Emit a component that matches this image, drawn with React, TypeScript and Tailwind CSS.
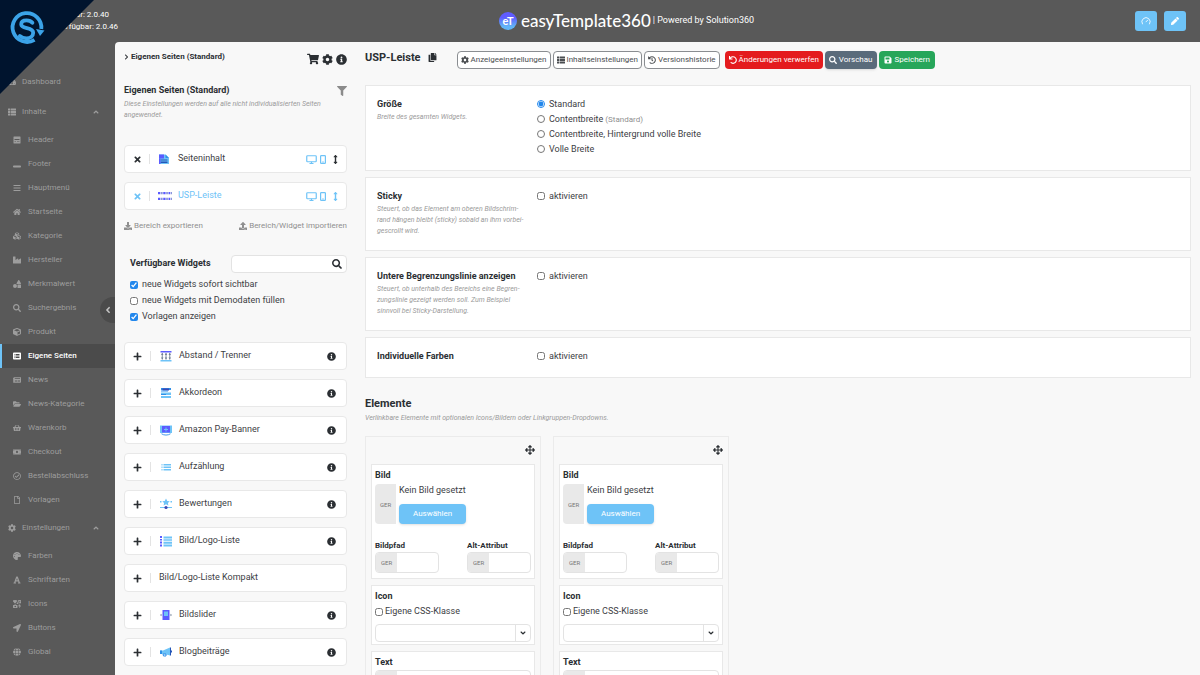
import React from "react";
import {
  FaAngleDown,
  FaAngleLeft,
  FaAngleUp,
  FaArrowsAlt,
  FaArrowsAltV,
  FaBars,
  FaChevronRight,
  FaCog,
  FaCopy,
  FaCube,
  FaCubes,
  FaDownload,
  FaFilter,
  FaFolderOpen,
  FaFont,
  FaGlobe,
  FaHistory,
  FaHome,
  FaIcons,
  FaIndustry,
  FaInfoCircle,
  FaListAlt,
  FaLocationArrow,
  FaMoneyBill,
  FaNewspaper,
  FaPalette,
  FaPen,
  FaPlus,
  FaRegCheckCircle,
  FaRegFile,
  FaSave,
  FaSearch,
  FaShapes,
  FaShoppingBasket,
  FaShoppingCart,
  FaTachometerAlt,
  FaThList,
  FaTimes,
  FaUndo,
  FaUpload,
  FaWindowMinimize,
} from "react-icons/fa";
import { Gauge } from "lucide-react";

const BLUE = "#6ec3f7";
const INDIGO = "#5b5bff";
const NAVY = "#3b47b5";

function HeaderIcon() {
  return (
    <svg viewBox="0 0 16 16" width="8" height="8" fill="currentColor" aria-hidden="true">
      <path fillRule="evenodd" d="M2 1h12a1 1 0 0 1 1 1v12a1 1 0 0 1-1 1H2a1 1 0 0 1-1-1V2a1 1 0 0 1 1-1zm1 5v2h10V6zm0 4v1h3v-1zm5 0v1h5v-1z" />
    </svg>
  );
}

function DesktopIcon() {
  return (
    <svg viewBox="0 0 22 18" width="11" height="9" fill="none" stroke="currentColor" strokeWidth="2.400" aria-hidden="true">
      <rect x="1.500" y="1.500" width="19" height="12" rx="1.500" />
      <path d="M11 13.500V17M7 17h8" />
    </svg>
  );
}

function PhoneIcon() {
  return (
    <svg viewBox="0 0 12 18" width="6" height="9" fill="none" stroke="currentColor" strokeWidth="2.400" aria-hidden="true">
      <rect x="1.200" y="1.200" width="9.600" height="15.600" rx="1.500" />
      <path d="M4.500 14h3" />
    </svg>
  );
}

type Art =
  | "content"
  | "usp"
  | "spacer"
  | "accordion"
  | "amazon"
  | "bullets"
  | "rating"
  | "logos"
  | "slider"
  | "blog";

const art: Record<Art, React.ReactNode> = {
  content: (
    <>
      <path d="M2 3h13l7 7v12H2z" fill={BLUE} />
      <path d="M2 3h10v8H2z" fill={INDIGO} />
      <path d="M15 3l7 7h-7z" fill="#2f8fe8" />
      <path d="M5 13h14v2H5zM5 17h14v3H5z" fill="#2456b8" />
      <path d="M2 11h3v11H2z" fill={INDIGO} />
    </>
  ),
  usp: (
    <>
      <path d="M0 5h4v4H0zM0 15h4v4H0zM9 5h4v4H9zM9 15h4v4H9zM18 5h3v4h-3zM18 15h3v4h-3z" fill={INDIGO} />
      <path d="M5 5h3v4H5zM5 15h3v4H5zM14 5h3v4h-3zM14 15h3v4h-3zM22 5h2v4h-2zM22 15h2v4h-2z" fill="#8a96d8" />
    </>
  ),
  spacer: (
    <>
      <path d="M1 2h22v3H1z" fill={INDIGO} />
      <path d="M1 20h22v3H1z" fill={BLUE} />
      <path d="M4.500 6v13M12 6v13M19.500 6v13" stroke="#6f7f95" strokeWidth="1.800" />
      <path d="M2 10l2.500-4L7 10zM9.500 10L12 6l2.500 4zM17 10l2.500-4 2.500 4zM2 15l2.500 4L7 15zM9.500 15l2.500 4 2.500-4zM17 15l2.500 4 2.500-4z" fill="#6f7f95" />
    </>
  ),
  accordion: (
    <>
      <path d="M2 2h20v4H2z" fill="#2f8fe8" />
      <path d="M5 3h13v4H5z" fill={NAVY} />
      <path d="M2 7h14v2H2z" fill="#2f8fe8" />
      <path d="M2 11h20v5H2zM2 18h20v4H2z" fill={BLUE} />
      <path d="M2 14h10v2H2z" fill="#2f8fe8" />
    </>
  ),
  amazon: (
    <>
      <path d="M0 3h24v15H0z" fill={BLUE} />
      <path d="M4 4h16v13H4z" fill={INDIGO} />
      <path d="M11 7h2v3h3v2h-3v3h-2v-3H8v-2h3z" fill={BLUE} />
      <path d="M3 19.500c5 3.500 13 3.500 18 0" stroke="#2f8fe8" strokeWidth="1.800" fill="none" />
    </>
  ),
  bullets: (
    <>
      <path d="M3 6h2v3H3zM3 11h2v3H3zM3 16h2v3H3z" fill={BLUE} />
      <path d="M7 6h15v3H7zM7 11h15v3H7zM7 16h15v3H7z" fill={BLUE} />
    </>
  ),
  rating: (
    <>
      <path d="M12 1l2.500 4.800 5 .8-3.600 3.600.9 5-4.800-2.500L7.200 15.200l.9-5-3.600-3.600 5-.8z" fill={BLUE} />
      <path d="M0 6h3v3H0zM21 6h3v3h-3z" fill={BLUE} />
      <path d="M0 18h24v2H0z" fill={BLUE} />
      <circle cx="12" cy="19" r="3.200" fill={NAVY} />
    </>
  ),
  logos: (
    <>
      <path d="M0 2h4v4H0zM0 8h4v3H0zM0 13h4v4H0zM0 19h4v4H0z" fill={INDIGO} />
      <path d="M7 3h17v4H7zM7 8.500h17v3H7zM7 13.500h17v4H7zM7 19h17v4H7z" fill={BLUE} />
    </>
  ),
  slider: (
    <>
      <path d="M5 2h14v20H5z" fill={INDIGO} />
      <path d="M8 5h8v9H8z" fill={BLUE} />
      <path d="M3 9.500v5L0 12zM21 9.500v5l3-2.500z" fill="#6f7f95" />
    </>
  ),
  blog: (
    <>
      <path d="M0 9h6l14-6v16L9 16H0z" fill={BLUE} />
      <path d="M0 9h4v7H0z" fill="#2f8fe8" />
      <path d="M20 3h2v16h-2zM22 9h2v4h-2z" fill="#2456b8" />
      <path d="M6 16h6v4H7z" fill="none" stroke="#2f8fe8" strokeWidth="2" />
    </>
  ),
};

function WidgetArt({ name }: { name: Art }) {
  return (
    <svg viewBox="0 0 24 24" className={name === "usp" ? "h-[14px] w-[14px] shrink-0" : "h-3 w-3 shrink-0"} aria-hidden="true">
      {art[name]}
    </svg>
  );
}

const contentLinks: { label: string; icon: React.ReactNode; active?: boolean }[] = [
  { label: "Header", icon: <HeaderIcon /> },
  { label: "Footer", icon: <FaWindowMinimize /> },
  { label: "Hauptmenü", icon: <FaBars /> },
  { label: "Startseite", icon: <FaHome /> },
  { label: "Kategorie", icon: <FaCubes /> },
  { label: "Hersteller", icon: <FaIndustry /> },
  { label: "Merkmalwert", icon: <FaShapes /> },
  { label: "Suchergebnis", icon: <FaSearch /> },
  { label: "Produkt", icon: <FaCube /> },
  { label: "Eigene Seiten", icon: <FaListAlt />, active: true },
  { label: "News", icon: <FaNewspaper /> },
  { label: "News-Kategorie", icon: <FaFolderOpen /> },
  { label: "Warenkorb", icon: <FaShoppingBasket /> },
  { label: "Checkout", icon: <FaMoneyBill /> },
  { label: "Bestellabschluss", icon: <FaRegCheckCircle /> },
  { label: "Vorlagen", icon: <FaRegFile /> },
];

const settingLinks = [
  { label: "Farben", icon: <FaPalette /> },
  { label: "Schriftarten", icon: <FaFont /> },
  { label: "Icons", icon: <FaIcons /> },
  { label: "Buttons", icon: <FaLocationArrow /> },
  { label: "Global", icon: <FaGlobe /> },
];

function NavLink({ label, icon, active }: { label: string; icon: React.ReactNode; active?: boolean }) {
  return (
    <li>
      <a
        href="#"
        className={
          active
            ? "flex h-6 items-center border-l-2 border-[#6ec3f7] bg-[#4b4b4b] pl-[11px] font-medium text-white"
            : "flex h-6 items-center pl-[13px]"
        }
      >
        <span className="flex w-[15px]">{icon}</span>
        {label}
      </a>
    </li>
  );
}

function NavGroup({ label, icon, children }: { label: string; icon: React.ReactNode; children: React.ReactNode }) {
  return (
    <div>
      <button type="button" className="flex h-6 w-full items-center pr-[15px] pl-2">
        <span className="flex w-[14px]">{icon}</span>
        <span className="flex-1 text-left">{label}</span>
        <FaAngleUp />
      </button>
      <ul className="mt-1">{children}</ul>
    </div>
  );
}

function Sidebar() {
  return (
    <nav className="relative w-[115px] shrink-0 bg-[#595959] pt-7 text-[8px] text-[#9d9d9d]" aria-label="Navigation">
      <a href="#" className="flex h-6 items-center pl-2">
        <span className="flex w-[14px]">
          <FaTachometerAlt />
        </span>
        Dashboard
      </a>
      <div className="mt-[6px] flex flex-col gap-1">
        <NavGroup label="Inhalte" icon={<FaThList />}>
          {contentLinks.map((l) => (
            <NavLink key={l.label} {...l} />
          ))}
        </NavGroup>
        <NavGroup label="Einstellungen" icon={<FaCog />}>
          {settingLinks.map((l) => (
            <NavLink key={l.label} {...l} />
          ))}
        </NavGroup>
      </div>
      <button
        type="button"
        aria-label="Navigation einklappen"
        className="absolute top-[255px] right-0 flex h-[26px] w-[15px] items-center justify-center rounded-l-full bg-[#4b4b4b] text-[10px] text-[#c4c4c4]"
      >
        <FaAngleLeft />
      </button>
    </nav>
  );
}

function TopBar() {
  return (
    <header className="flex h-[42px] shrink-0 items-center bg-[#595959] text-white">
      <div className="flex w-[118px] shrink-0 flex-col items-end text-[8px] leading-3 whitespace-nowrap">
        <span className="pr-[9px]">ar: 2.0.40</span>
        <span>Verfügbar: 2.0.46</span>
      </div>
      <div className="flex flex-1 items-center justify-center">
        <svg viewBox="0 0 36 36" className="mr-1 h-[18px] w-[18px]" role="img" aria-label="easyTemplate360">
          <defs>
            <linearGradient id="badge" x1="0" y1="0" x2="0" y2="1">
              <stop offset="0.3" stopColor="#5f5cff" />
              <stop offset="0.8" stopColor="#62b4f7" />
            </linearGradient>
          </defs>
          <circle cx="18" cy="18" r="18" fill="url(#badge)" />
          <text x="18" y="26" textAnchor="middle" fill="#fff" fontSize="22" fontWeight="700" fontFamily="Lato, sans-serif">
            eT
          </text>
        </svg>
        <span className="font-['Lato',sans-serif] text-[17px] leading-[22px] font-medium">easyTemplate360</span>
        <span className="ml-[2px] text-[9px]">| Powered by Solution360</span>
      </div>
      <div className="flex gap-[7px] pr-[14px]">
        <button type="button" aria-label="Dashboard" className="flex h-5 w-[22px] items-center justify-center rounded-[3px] bg-[#6ec3f7]">
          <Gauge size={10} />
        </button>
        <button type="button" aria-label="Bearbeiten" className="flex h-5 w-[22px] items-center justify-center rounded-[3px] bg-[#6ec3f7] text-[8px]">
          <FaPen />
        </button>
      </div>
    </header>
  );
}

function CornerLogo() {
  return (
    <svg viewBox="0 0 94 94" className="absolute top-0 left-0 h-[94px] w-[94px]" role="img" aria-label="Solution360">
      <polygon points="0,0 94,0 0,94" fill="#00142e" />
      <g fill="none" stroke="#3ba3e8">
        <path d="M34.500 39.800A14.400 14.400 0 1 1 41.300 29" strokeWidth="3.800" />
        <path
          d="M32.400 22.800C30.800 20.800 28.500 20.400 26.500 20.400c-3.400 0-5.300 1.600-5.300 3.900 0 5.400 12 2.200 12 8.500 0 3.400-2.800 5.500-6.700 5.500-2.500 0-4.700-.6-6.700-2.400"
          strokeWidth="3.800"
          strokeLinecap="round"
        />
      </g>
      <polygon points="36,29 44.500,30.500 40,36" fill="#3ba3e8" />
    </svg>
  );
}

function PlacedWidget({ label, icon, active }: { label: string; icon: Art; active?: boolean }) {
  return (
    <li
      className={
        "flex h-7 items-center rounded-[4px] border border-[#e8e8e8] bg-white pr-[6px] text-[9px] " +
        (active ? "text-[#6ec3f7]" : "text-[#3d4044]")
      }
    >
      <button type="button" aria-label={label + " entfernen"} className="flex w-6 justify-center">
        <FaTimes className={active ? "text-[#6ec3f7]" : "text-[#2b2f33]"} />
      </button>
      <span className="h-[10px] w-[9px] shrink-0 border-l border-[#e3e3e3]" />
      <span className="flex w-5 justify-start">
        <WidgetArt name={icon} />
      </span>
      <span className="flex-1">{label}</span>
      <span className="flex items-center gap-[3px] text-[#6ec3f7]">
        <DesktopIcon />
        <PhoneIcon />
      </span>
      <FaArrowsAltV className={active ? "ml-[5px] text-[#6ec3f7]" : "ml-[5px] text-[#2b2f33]"} />
    </li>
  );
}

const widgets: { label: string; icon?: Art }[] = [
  { label: "Abstand / Trenner", icon: "spacer" },
  { label: "Akkordeon", icon: "accordion" },
  { label: "Amazon Pay-Banner", icon: "amazon" },
  { label: "Aufzählung", icon: "bullets" },
  { label: "Bewertungen", icon: "rating" },
  { label: "Bild/Logo-Liste", icon: "logos" },
  { label: "Bild/Logo-Liste Kompakt" },
  { label: "Bildslider", icon: "slider" },
  { label: "Blogbeiträge", icon: "blog" },
];

function AvailableWidget({ label, icon }: { label: string; icon?: Art }) {
  return (
    <li className="flex h-7 shrink-0 items-center rounded-[4px] border border-[#e8e8e8] bg-white pr-[10px] text-[9px] text-[#3d4044]">
      <button type="button" aria-label={label + " hinzufügen"} className="flex w-[25px] justify-center text-[#2b2f33]">
        <FaPlus />
      </button>
      <span className={icon ? "h-[10px] w-[10px] shrink-0 border-l border-[#e3e3e3]" : "h-[10px] w-[9px] shrink-0 border-l border-[#e3e3e3]"} />
      {icon && (
        <span className="flex w-[19px]">
          <WidgetArt name={icon} />
        </span>
      )}
      <span className="flex-1">{label}</span>
      {icon && <FaInfoCircle className="text-[#2b2f33]" />}
    </li>
  );
}

function Check({ label, checked }: { label: string; checked?: boolean }) {
  return (
    <label className="flex h-4 items-center gap-1">
      <input type="checkbox" defaultChecked={checked} className="mb-px h-2 w-2 accent-[#2287ec]" />
      {label}
    </label>
  );
}

function WidgetPanel() {
  return (
    <section className="flex w-[232px] shrink-0 flex-col overflow-hidden pt-[7px] pl-[9px]">
      <div className="flex h-4 items-center justify-between">
        <div className="flex items-center gap-[2px] text-[8px] font-bold">
          <FaChevronRight className="h-[6px] w-[5px]" />
          Eigenen Seiten (Standard)
        </div>
        <div className="flex items-center gap-[3px] pt-1 text-[11px]">
          <FaShoppingCart className="text-[12px]" />
          <FaCog />
          <FaInfoCircle />
        </div>
      </div>
      <div className="mt-[18px] flex h-4 items-center justify-between">
        <h2 className="text-[9px] font-bold">Eigenen Seiten (Standard)</h2>
        <FaFilter className="text-[10px] text-[#8b8b8b]" />
      </div>
      <p className="text-[7px] leading-[11px] text-[#9a9a9a] italic">
        Diese Einstellungen werden auf alle nicht individualisierten Seiten angewendet.
      </p>
      <ul className="mt-6 flex flex-col gap-[9px]">
        <PlacedWidget label="Seiteninhalt" icon="content" />
        <PlacedWidget label="USP-Leiste" icon="usp" active />
      </ul>
      <div className="mt-2 flex h-4 items-center justify-between text-[8px] text-[#8f8f8f]">
        <button type="button" className="flex items-center gap-[2px]">
          <FaDownload />
          Bereich exportieren
        </button>
        <button type="button" className="flex items-center gap-[2px]">
          <FaUpload />
          Bereich/Widget importieren
        </button>
      </div>
      <div className="mt-[21px] flex items-center justify-between pl-[6px]">
        <h2 className="text-[9px] font-bold">Verfügbare Widgets</h2>
        <label className="flex h-[18px] w-[116px] items-center rounded-[4px] border border-[#e3e3e3] bg-white pr-1 text-[10px]">
          <input type="search" aria-label="Widgets suchen" className="min-w-0 flex-1 px-1 text-[9px] outline-none" />
          <FaSearch />
        </label>
      </div>
      <div className="mt-1 pl-[6px] text-[9px] text-[#3d4044]">
        <Check label="neue Widgets sofort sichtbar" checked />
        <Check label="neue Widgets mit Demodaten füllen" />
        <Check label="Vorlagen anzeigen" checked />
      </div>
      <ul className="mt-[17px] flex flex-col gap-[9px]">
        {widgets.map((w) => (
          <AvailableWidget key={w.label} {...w} />
        ))}
      </ul>
    </section>
  );
}

const outline =
  "flex h-[18px] items-center gap-[2px] rounded-[4px] border border-[#8a8d91] bg-white px-[3px] text-[#4a4d50]";

function SettingCard({ title, text, children }: { title: string; text?: string; children: React.ReactNode }) {
  return (
    <div className="grid grid-cols-[160px_1fr] border border-[#e8e8e8] bg-white px-[11px] pt-[11px] pb-[13px]">
      <div>
        <h3 className="text-[9px] leading-[15px] font-bold">{title}</h3>
        {text && <p className="w-[150px] text-[7px] leading-[11px] text-[#9a9a9a] italic">{text}</p>}
      </div>
      <div className="text-[9px] leading-[15px] text-[#3d4044]">{children}</div>
    </div>
  );
}

function Activate() {
  return (
    <label className="flex h-[15px] items-center gap-1">
      <input type="checkbox" className="mb-[2px] h-2 w-2" />
      aktivieren
    </label>
  );
}

const widths: { label: string; note?: string }[] = [
  { label: "Standard" },
  { label: "Contentbreite", note: "(Standard)" },
  { label: "Contentbreite, Hintergrund volle Breite" },
  { label: "Volle Breite" },
];

function LangInput({ label, id, className }: { label: string; id: string; className: string }) {
  return (
    <div className={className}>
      <label htmlFor={id} className="block text-[8px] leading-[13px] font-bold">
        {label}
      </label>
      <div className="flex h-[21px] overflow-hidden rounded-[4px] border border-[#e3e3e3] bg-white">
        <span className="flex w-[21px] shrink-0 items-center justify-center bg-[#e9e9e9] text-[6px] text-[#777]">GER</span>
        <input id={id} type="text" className="min-w-0 flex-1 px-1 text-[8px] outline-none" />
      </div>
    </div>
  );
}

function ElementColumn({ n }: { n: number }) {
  return (
    <article className="w-[176px] border border-[#ebebeb] px-[5px] pt-[7px]">
      <div className="flex h-5 justify-end text-[10px]">
        <button type="button" aria-label="Element verschieben" className="flex h-3 items-center">
          <FaArrowsAlt />
        </button>
      </div>
      <div className="flex flex-col gap-[6px]">
        <div className="border border-[#e8e8e8] bg-white px-[3px] pt-1 pb-[5px]">
          <h4 className="text-[9px] leading-3 font-bold">Bild</h4>
          <div className="mt-[3px] flex gap-[3px]">
            <span className="flex h-10 w-[21px] items-center justify-center rounded-l-[4px] bg-[#e9e9e9] text-[6px] text-[#777]">GER</span>
            <div className="flex flex-col items-start justify-between">
              <span className="text-[9px] leading-3 text-[#3d4044]">Kein Bild gesetzt</span>
              <button type="button" className="h-5 rounded-[4px] bg-[#6ec3f7] px-[14px] text-[8px] text-white shadow-sm">
                Auswählen
              </button>
            </div>
          </div>
          <div className="mt-[15px] flex justify-between">
            <LangInput id={"pfad-" + n} label="Bildpfad" className="w-16" />
            <LangInput id={"alt-" + n} label="Alt-Attribut" className="w-16" />
          </div>
        </div>
        <div className="border border-[#e8e8e8] bg-white px-[3px] pt-1 pb-[2px]">
          <h4 className="text-[9px] leading-3 font-bold">Icon</h4>
          <label className="mt-[2px] flex h-4 items-center gap-[2px] text-[9px] text-[#3d4044]">
            <input type="checkbox" className="mb-px h-2 w-2" />
            Eigene CSS-Klasse
          </label>
          <div className="mt-1 grid h-[18px] grid-cols-[1fr_15px] overflow-hidden rounded-[4px] border border-[#e3e3e3] bg-white">
            <select aria-label="Icon" className="col-span-2 col-start-1 row-start-1 appearance-none bg-transparent px-1 text-[8px] outline-none">
              <option value="" />
            </select>
            <span className="pointer-events-none col-start-2 row-start-1 flex items-center justify-center border-l border-[#e3e3e3] text-[8px]">
              <FaAngleDown />
            </span>
          </div>
        </div>
        <div className="border border-[#e8e8e8] bg-white px-[3px] pt-1 pb-[5px]">
          <label htmlFor={"text-" + n} className="mb-[2px] block text-[9px] leading-3 font-bold">
            Text
          </label>
          <div className="flex h-10 overflow-hidden rounded-[4px] border border-[#e3e3e3] bg-white">
            <span className="w-[21px] shrink-0 bg-[#e9e9e9]" />
            <textarea id={"text-" + n} className="min-w-0 flex-1 resize-none px-1 text-[8px] outline-none" />
          </div>
        </div>
      </div>
    </article>
  );
}

function Editor() {
  return (
    <main className="min-w-0 flex-1 overflow-hidden pt-2 pr-[9px] pl-[18px]">
      <div className="flex items-start">
        <h1 className="text-[11px] leading-[15px] font-bold">USP-Leiste</h1>
        <button type="button" aria-label="Kopieren" className="mt-[3px] ml-[7px] text-[9px]">
          <FaCopy />
        </button>
        <div className="mt-px ml-5 flex gap-[2px] text-[8px] whitespace-nowrap">
          <button type="button" className={outline}>
            <FaCog />
            Anzeigeeinstellungen
          </button>
          <button type="button" className={outline}>
            <FaThList />
            Inhaltseinstellungen
          </button>
          <button type="button" className={outline}>
            <FaHistory />
            Versionshistorie
          </button>
          <button type="button" className="ml-[3px] flex h-[18px] items-center gap-[2px] rounded-[4px] bg-[#e41b1e] px-1 text-white">
            <FaUndo />
            Änderungen verwerfen
          </button>
          <button type="button" className="flex h-[18px] items-center gap-[2px] rounded-[4px] bg-[#5a6b7b] px-1 text-white shadow-sm">
            <FaSearch />
            Vorschau
          </button>
          <button type="button" className="flex h-[18px] items-center gap-[3px] rounded-[4px] bg-[#27a65a] px-[5px] text-white">
            <FaSave />
            Speichern
          </button>
        </div>
      </div>

      <div className="mt-4 flex flex-col gap-[6px]">
        <SettingCard title="Größe" text="Breite des gesamten Widgets.">
          {widths.map((w, i) => (
            <label key={w.label} className="flex h-[15px] items-center gap-1">
              <input type="radio" name="breite" defaultChecked={i === 0} className="mb-[2px] h-2 w-2 accent-[#2287ec]" />
              <span>
                {w.label}
                {w.note && <span className="text-[8px] text-[#8f8f8f]"> {w.note}</span>}
              </span>
            </label>
          ))}
        </SettingCard>
        <SettingCard title="Sticky" text={"Steuert, ob das Element am oberen Bildschrim\u00ADrand hängen bleibt (sticky) sobald an ihm vorbei\u00ADgescrollt wird."}>
          <Activate />
        </SettingCard>
        <SettingCard
          title="Untere Begrenzungslinie anzeigen"
          text={"Steuert, ob unterhalb des Bereichs eine Begren\u00ADzungslinie gezeigt werden soll. Zum Beispiel sinnvoll bei Sticky-Darstellung."}
        >
          <Activate />
        </SettingCard>
        <SettingCard title="Individuelle Farben">
          <Activate />
        </SettingCard>
      </div>

      <h2 className="mt-[18px] text-[11px] leading-[15px] font-bold">Elemente</h2>
      <p className="mt-[2px] text-[7px] leading-[11px] text-[#9a9a9a] italic">
        Verlinkbare Elemente mit optionalen Icons/Bildern oder Linkgruppen-Dropdowns.
      </p>
      <div className="mt-3 flex gap-3">
        <ElementColumn n={1} />
        <ElementColumn n={2} />
      </div>
    </main>
  );
}

export default function App() {
  return (
    <div className="relative flex h-screen flex-col overflow-hidden bg-[#595959] font-['Roboto',sans-serif] text-[#2b2f33]">
      <TopBar />
      <div className="flex min-h-0 flex-1">
        <Sidebar />
        <div className="flex min-w-0 flex-1 rounded-tl-[4px] bg-[#f8f8f8]">
          <WidgetPanel />
          <Editor />
        </div>
      </div>
      <CornerLogo />
    </div>
  );
}
